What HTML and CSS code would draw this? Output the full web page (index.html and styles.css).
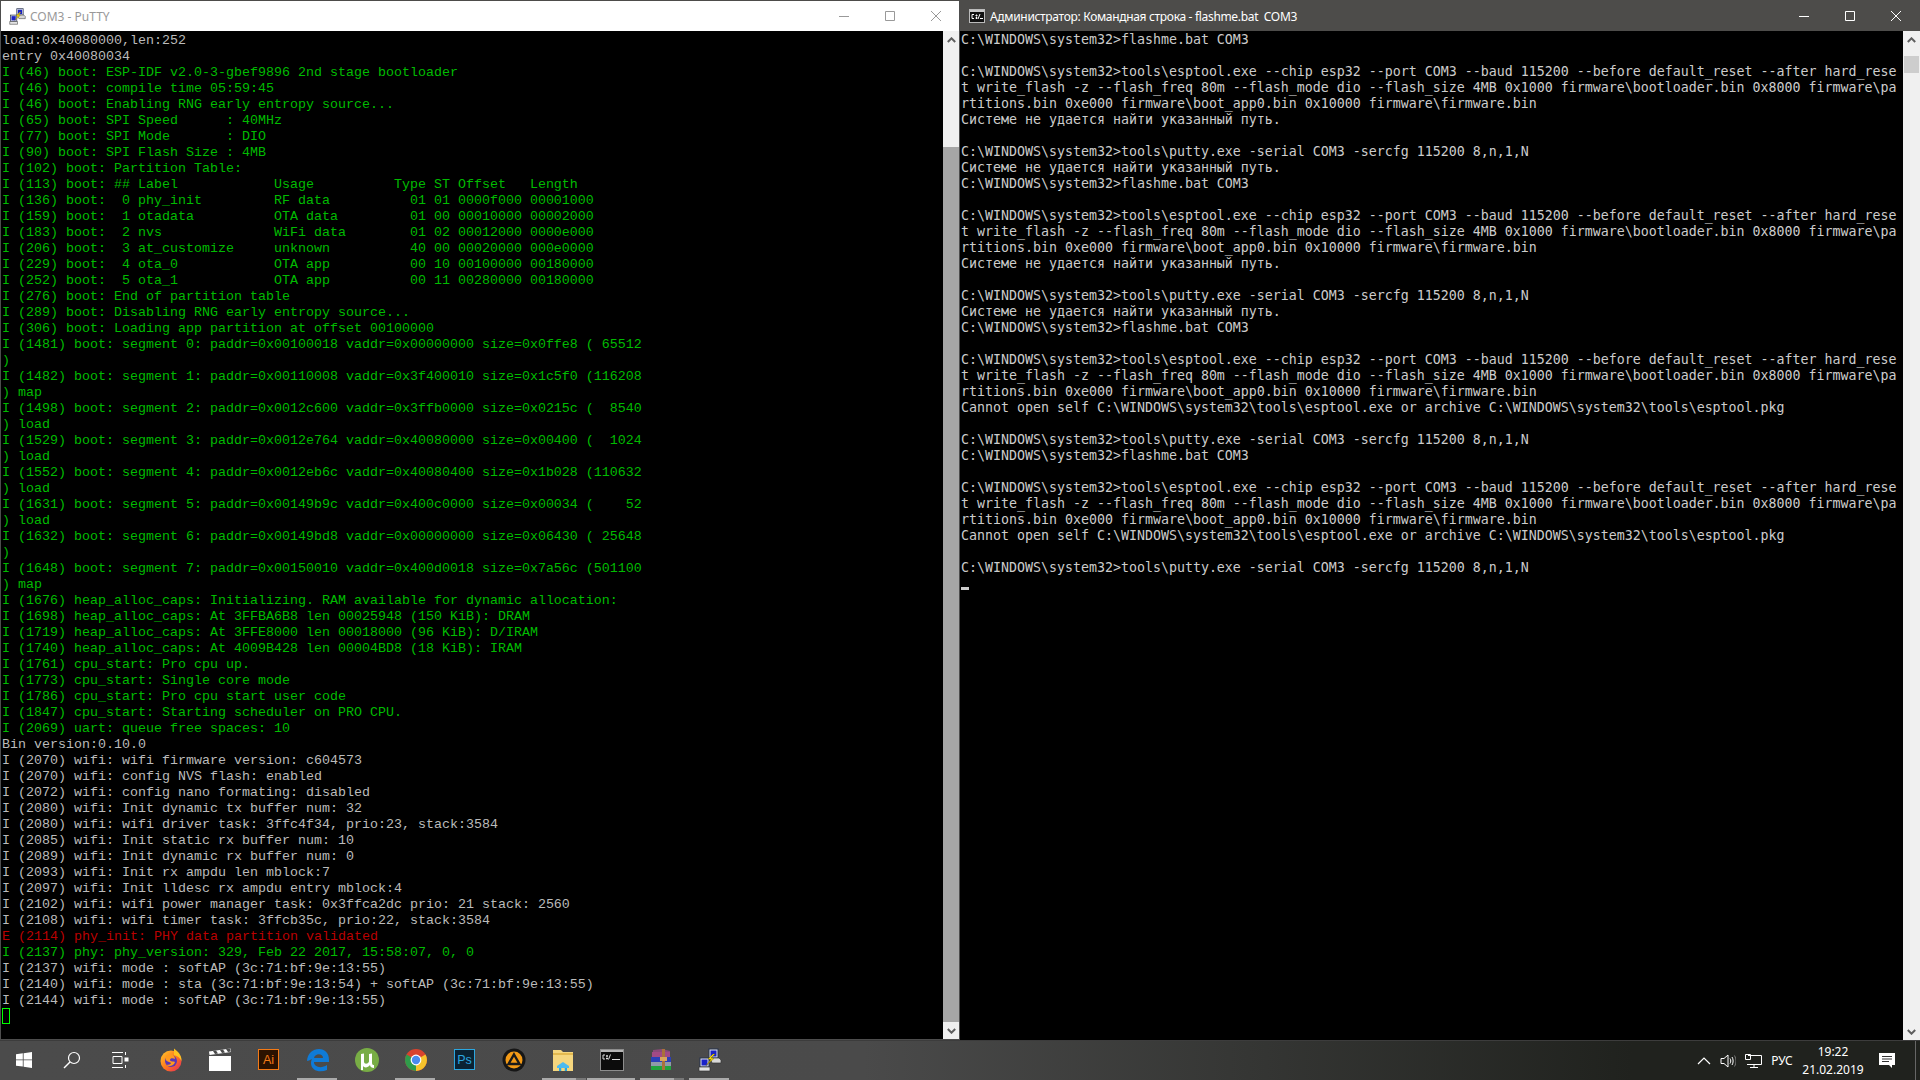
FILE: index.html
```html
<!DOCTYPE html>
<html lang="ru">
<head>
    <meta charset="UTF-8">
    <title>COM3 - PuTTY</title>
    <link rel="stylesheet" href="styles.css">
</head>
<body>
    <svg class="defs" width="0" height="0">
        <symbol id="putty-icon" viewBox="0 0 24 24">
            <rect x="11" y="1" width="9" height="9" fill="#dfe3ea" stroke="#26324f"/>
            <rect x="12.5" y="2.5" width="6" height="6" fill="#1a22c8"/>
            <path d="M12 10h9l2 2v3H14z" fill="#d8d8d8" stroke="#333" stroke-width=".7"/>
            <rect x="2" y="10" width="9" height="9" fill="#dfe3ea" stroke="#26324f"/>
            <rect x="3.500" y="11.500" width="6" height="6" fill="#1a22c8"/>
            <path d="M1 19h11v4H1z" fill="#e4e4e4" stroke="#333" stroke-width=".7"/>
            <path d="M15 6l-5 5 3 .5-5 6 8-7-3-.5 4-4z" fill="#ffe100" stroke="#6b5a00" stroke-width=".4"/>
        </symbol>
    </svg>

    <div class="desktop">
        <section class="window window-putty">
            <header class="titlebar">
                <svg class="title-icon"><use href="#putty-icon"/></svg>
                <span class="title-text">COM3 - PuTTY</span>
                <div class="win-controls">
                    <span class="win-btn"><svg width="10" height="10" viewBox="0 0 10 10"><path d="M0 5.500h10" stroke="currentColor"/></svg></span>
                    <span class="win-btn"><svg width="10" height="10" viewBox="0 0 10 10"><path d="M.5.500h9v9h-9z" fill="none" stroke="currentColor"/></svg></span>
                    <span class="win-btn"><svg width="10" height="10" viewBox="0 0 10 10"><path d="M0 0l10 10M10 0L0 10" stroke="currentColor"/></svg></span>
                </div>
            </header>
            <div class="window-body">
<pre class="putty-term"><span class="t-gray">load:0x40080000,len:252
entry 0x40080034
</span><span class="t-green">I (46) boot: ESP-IDF v2.0-3-gbef9896 2nd stage bootloader
I (46) boot: compile time 05:59:45
I (46) boot: Enabling RNG early entropy source...
I (65) boot: SPI Speed      : 40MHz
I (77) boot: SPI Mode       : DIO
I (90) boot: SPI Flash Size : 4MB
I (102) boot: Partition Table:
I (113) boot: ## Label            Usage          Type ST Offset   Length
I (136) boot:  0 phy_init         RF data          01 01 0000f000 00001000
I (159) boot:  1 otadata          OTA data         01 00 00010000 00002000
I (183) boot:  2 nvs              WiFi data        01 02 00012000 0000e000
I (206) boot:  3 at_customize     unknown          40 00 00020000 000e0000
I (229) boot:  4 ota_0            OTA app          00 10 00100000 00180000
I (252) boot:  5 ota_1            OTA app          00 11 00280000 00180000
I (276) boot: End of partition table
I (289) boot: Disabling RNG early entropy source...
I (306) boot: Loading app partition at offset 00100000
I (1481) boot: segment 0: paddr=0x00100018 vaddr=0x00000000 size=0x0ffe8 ( 65512
)
I (1482) boot: segment 1: paddr=0x00110008 vaddr=0x3f400010 size=0x1c5f0 (116208
) map
I (1498) boot: segment 2: paddr=0x0012c600 vaddr=0x3ffb0000 size=0x0215c (  8540
) load
I (1529) boot: segment 3: paddr=0x0012e764 vaddr=0x40080000 size=0x00400 (  1024
) load
I (1552) boot: segment 4: paddr=0x0012eb6c vaddr=0x40080400 size=0x1b028 (110632
) load
I (1631) boot: segment 5: paddr=0x00149b9c vaddr=0x400c0000 size=0x00034 (    52
) load
I (1632) boot: segment 6: paddr=0x00149bd8 vaddr=0x00000000 size=0x06430 ( 25648
)
I (1648) boot: segment 7: paddr=0x00150010 vaddr=0x400d0018 size=0x7a56c (501100
) map
I (1676) heap_alloc_caps: Initializing. RAM available for dynamic allocation:
I (1698) heap_alloc_caps: At 3FFBA6B8 len 00025948 (150 KiB): DRAM
I (1719) heap_alloc_caps: At 3FFE8000 len 00018000 (96 KiB): D/IRAM
I (1740) heap_alloc_caps: At 4009B428 len 00004BD8 (18 KiB): IRAM
I (1761) cpu_start: Pro cpu up.
I (1773) cpu_start: Single core mode
I (1786) cpu_start: Pro cpu start user code
I (1847) cpu_start: Starting scheduler on PRO CPU.
I (2069) uart: queue free spaces: 10
</span><span class="t-gray">Bin version:0.10.0
I (2070) wifi: wifi firmware version: c604573
I (2070) wifi: config NVS flash: enabled
I (2072) wifi: config nano formating: disabled
I (2080) wifi: Init dynamic tx buffer num: 32
I (2080) wifi: wifi driver task: 3ffc4f34, prio:23, stack:3584
I (2085) wifi: Init static rx buffer num: 10
I (2089) wifi: Init dynamic rx buffer num: 0
I (2093) wifi: Init rx ampdu len mblock:7
I (2097) wifi: Init lldesc rx ampdu entry mblock:4
I (2102) wifi: wifi power manager task: 0x3ffca2dc prio: 21 stack: 2560
I (2108) wifi: wifi timer task: 3ffcb35c, prio:22, stack:3584
</span><span class="t-red">E (2114) phy_init: PHY data partition validated
</span><span class="t-green">I (2137) phy: phy_version: 329, Feb 22 2017, 15:58:07, 0, 0
</span><span class="t-gray">I (2137) wifi: mode : softAP (3c:71:bf:9e:13:55)
I (2140) wifi: mode : sta (3c:71:bf:9e:13:54) + softAP (3c:71:bf:9e:13:55)
I (2144) wifi: mode : softAP (3c:71:bf:9e:13:55)
</span><span class="putty-cursor"></span></pre>
                <div class="scrollbar">
                    <span class="sb-arrow"><svg width="9" height="6" viewBox="0 0 9 6"><path d="M.8 5L4.500 1.300 8.200 5" fill="none" stroke="#5f5f5f" stroke-width="2"/></svg></span>
                    <div class="sb-gap sb-gap-putty"></div>
                    <div class="sb-thumb sb-thumb-putty"></div>
                    <span class="sb-arrow"><svg width="9" height="6" viewBox="0 0 9 6"><path d="M.8 1L4.500 4.700 8.200 1" fill="none" stroke="#5f5f5f" stroke-width="2"/></svg></span>
                </div>
            </div>
        </section>

        <section class="window window-cmd">
            <header class="titlebar">
                <svg class="title-icon title-icon-cmd" viewBox="0 0 16 16">
                    <rect x=".5" y="1.500" width="15" height="13" fill="#111" stroke="#bbb"/>
                    <rect x="1" y="2" width="14" height="2" fill="#c8c8c8"/>
                    <path d="M5 6.500H3v4h2M7 7h1v1H7zm0 2.500h1v1H7zM9 11l2-5M11 10.500h3" fill="none" stroke="#fff"/>
                </svg>
                <span class="title-text">Администратор: Командная строка - flashme.bat  COM3</span>
                <div class="win-controls">
                    <span class="win-btn"><svg width="10" height="10" viewBox="0 0 10 10"><path d="M0 5.500h10" stroke="currentColor"/></svg></span>
                    <span class="win-btn"><svg width="10" height="10" viewBox="0 0 10 10"><path d="M.5.500h9v9h-9z" fill="none" stroke="currentColor"/></svg></span>
                    <span class="win-btn"><svg width="10" height="10" viewBox="0 0 10 10"><path d="M0 0l10 10M10 0L0 10" stroke="currentColor"/></svg></span>
                </div>
            </header>
            <div class="window-body">
<pre class="cmd-term">C:\WINDOWS\system32>flashme.bat COM3

C:\WINDOWS\system32>tools\esptool.exe --chip esp32 --port COM3 --baud 115200 --before default_reset --after hard_rese
t write_flash -z --flash_freq 80m --flash_mode dio --flash_size 4MB 0x1000 firmware\bootloader.bin 0x8000 firmware\pa
rtitions.bin 0xe000 firmware\boot_app0.bin 0x10000 firmware\firmware.bin
Системе не удается найти указанный путь.

C:\WINDOWS\system32>tools\putty.exe -serial COM3 -sercfg 115200 8,n,1,N
Системе не удается найти указанный путь.
C:\WINDOWS\system32>flashme.bat COM3

C:\WINDOWS\system32>tools\esptool.exe --chip esp32 --port COM3 --baud 115200 --before default_reset --after hard_rese
t write_flash -z --flash_freq 80m --flash_mode dio --flash_size 4MB 0x1000 firmware\bootloader.bin 0x8000 firmware\pa
rtitions.bin 0xe000 firmware\boot_app0.bin 0x10000 firmware\firmware.bin
Системе не удается найти указанный путь.

C:\WINDOWS\system32>tools\putty.exe -serial COM3 -sercfg 115200 8,n,1,N
Системе не удается найти указанный путь.
C:\WINDOWS\system32>flashme.bat COM3

C:\WINDOWS\system32>tools\esptool.exe --chip esp32 --port COM3 --baud 115200 --before default_reset --after hard_rese
t write_flash -z --flash_freq 80m --flash_mode dio --flash_size 4MB 0x1000 firmware\bootloader.bin 0x8000 firmware\pa
rtitions.bin 0xe000 firmware\boot_app0.bin 0x10000 firmware\firmware.bin
Cannot open self C:\WINDOWS\system32\tools\esptool.exe or archive C:\WINDOWS\system32\tools\esptool.pkg

C:\WINDOWS\system32>tools\putty.exe -serial COM3 -sercfg 115200 8,n,1,N
C:\WINDOWS\system32>flashme.bat COM3

C:\WINDOWS\system32>tools\esptool.exe --chip esp32 --port COM3 --baud 115200 --before default_reset --after hard_rese
t write_flash -z --flash_freq 80m --flash_mode dio --flash_size 4MB 0x1000 firmware\bootloader.bin 0x8000 firmware\pa
rtitions.bin 0xe000 firmware\boot_app0.bin 0x10000 firmware\firmware.bin
Cannot open self C:\WINDOWS\system32\tools\esptool.exe or archive C:\WINDOWS\system32\tools\esptool.pkg

C:\WINDOWS\system32>tools\putty.exe -serial COM3 -sercfg 115200 8,n,1,N
<span class="cmd-cursor"></span></pre>
                <div class="scrollbar">
                    <span class="sb-arrow"><svg width="9" height="6" viewBox="0 0 9 6"><path d="M.8 5L4.500 1.300 8.200 5" fill="none" stroke="#5f5f5f" stroke-width="2"/></svg></span>
                    <div class="sb-thumb sb-thumb-cmd"></div>
                    <div class="sb-gap sb-gap-cmd"></div>
                    <span class="sb-arrow"><svg width="9" height="6" viewBox="0 0 9 6"><path d="M.8 1L4.500 4.700 8.200 1" fill="none" stroke="#5f5f5f" stroke-width="2"/></svg></span>
                </div>
            </div>
        </section>
    </div>

    <footer class="taskbar">
        <div class="task-sys">
            <span class="task-btn">
                <svg width="16" height="16" viewBox="0 0 16 16"><path d="M0 2.300l6.800-1v6.200H0zM7.600 1.200L16 0v7.500H7.600zM0 8.300h6.800v6.300L0 13.700zM7.600 8.300H16V16l-8.400-1.200z" fill="#fff"/></svg>
            </span>
            <span class="task-btn">
                <svg width="18" height="18" viewBox="0 0 18 18"><circle cx="11" cy="7" r="5.500" fill="none" stroke="#fff" stroke-width="1.200"/><path d="M7 11l-6 6" stroke="#fff" stroke-width="1.400"/></svg>
            </span>
            <span class="task-btn">
                <svg width="18" height="18" viewBox="0 0 18 18" fill="none" stroke="#fff"><path d="M1 1.500h11M1 16.500h11M2 5.500h9v7H2zM14.500 1v3M14.500 14v3"/><rect x="14" y="7" width="3" height="3" fill="#fff"/></svg>
            </span>
        </div>
        <div class="task-apps">
            <span class="task-btn app">
                <svg width="24" height="24" viewBox="0 0 24 24">
                    <defs><linearGradient id="ff" x1="0" y1="0" x2="1" y2="1"><stop offset="0" stop-color="#ffcb2d"/><stop offset=".5" stop-color="#ff7a1c"/><stop offset="1" stop-color="#e3245f"/></linearGradient></defs>
                    <circle cx="12" cy="13" r="10.500" fill="url(#ff)"/>
                    <path d="M15 .5c4 3 8 7 7.500 12.500C21 10 19 8 15 7z" fill="#ffc21f"/>
                    <circle cx="12" cy="13" r="6" fill="#5a37b5"/>
                    <path d="M8 7c4-2 8 0 8 4-2-1-5-1-5 1s4 1 5 2c-1 4-6 5-9 3 3 0 5-1 5-2s-4-1-5-3 0-4 1-5z" fill="#ff9a1e"/>
                </svg>
            </span>
            <span class="task-btn app">
                <svg width="24" height="24" viewBox="0 0 24 24">
                    <rect x="1" y="8" width="22" height="15" fill="#fff"/>
                    <path d="M1 3.500L22.500 .5l.5 3.500L1.500 7z" fill="#fff"/>
                    <path d="M5 3l2 3 3-.4-2-3zM12 2l2 3 3-.4-2-3zM18 1l2 3 2.800-.4-.8-3z" fill="#4a4a4a"/>
                </svg>
            </span>
            <span class="task-btn app">
                <span class="badge badge-ai">Ai</span>
            </span>
            <span class="task-btn app on">
                <svg width="24" height="24" viewBox="0 0 24 24">
                    <path d="M1 13C1.500 5 7 1 13 1c6 0 10 4 10 11v2H8c0 5 7 7 13 3v5c-7 3-16 1-16-7 0-2 .5-3 1-4-2 1-4 2-5 2zM8 10h9c0-5-8-5-9 0z" fill="#0f7bd8"/>
                </svg>
            </span>
            <span class="task-btn app">
                <svg width="24" height="24" viewBox="0 0 24 24">
                    <circle cx="12" cy="12" r="12" fill="#78ad45"/>
                    <path d="M6 6l3-.5v8c0 3 4 3 5 0V6l3-.5V14c0 3 1 3 2 3v3c-2 0-4-1-4-3-2 3-6 3-7 1v4H6z" fill="#fff"/>
                </svg>
            </span>
            <span class="task-btn app on">
                <svg width="24" height="24" viewBox="0 0 24 24">
                    <circle cx="12" cy="12" r="11" fill="#d8432f"/>
                    <path d="M12 12L2.500 6.500A11 11 0 0 0 12 23z" fill="#2f9c4b"/>
                    <path d="M12 12l9.500-5.500A11 11 0 0 1 12 23z" fill="#f6c32c"/>
                    <circle cx="12" cy="12" r="5.400" fill="#fff"/>
                    <circle cx="12" cy="12" r="4.200" fill="#4a8bef"/>
                </svg>
            </span>
            <span class="task-btn app">
                <span class="badge badge-ps">Ps</span>
            </span>
            <span class="task-btn app">
                <svg width="24" height="24" viewBox="0 0 24 24">
                    <circle cx="12" cy="12" r="11.500" fill="#161616"/>
                    <circle cx="12" cy="12" r="8.500" fill="#f39a16"/>
                    <path d="M12 6.500l5.500 9.500h-11z" fill="none" stroke="#1a1a1a" stroke-width="2.400"/>
                </svg>
            </span>
            <span class="task-btn app on stacked">
                <svg width="24" height="24" viewBox="0 0 24 24">
                    <path d="M2 2h8l2 2h10v19H2z" fill="#f5d67e"/>
                    <path d="M2 5h20v2H2z" fill="#e3b94f"/>
                    <path d="M8 23v-5l4-3 4 3v5h-2.500v-3h-3v3z" fill="#2aa6e0"/>
                    <path d="M6 18l6-4 6 4v2H6z" fill="#4cbaf0"/>
                    <path d="M10.500 20h3v3h-3z" fill="#f5d67e"/>
                </svg>
            </span>
            <span class="task-btn app on wide">
                <svg width="24" height="22" viewBox="0 0 24 22">
                    <rect x=".5" y=".5" width="23" height="21" fill="#0c0c0c" stroke="#8d8d8d"/>
                    <rect x="1" y="1" width="22" height="2" fill="#b5b5b5"/>
                    <path d="M5 6H3v4h2M6.500 6.500h1v1h-1zm0 2.500h1v1h-1zM8.500 10.500l2-5M12 10.500h8" fill="none" stroke="#ddd"/>
                </svg>
            </span>
            <span class="task-btn app on stacked">
                <svg width="24" height="24" viewBox="0 0 24 24">
                    <path d="M4 2l9-1 8 2v6H4z" fill="#8a4a7a"/>
                    <path d="M2 9h20v5H2z" fill="#2b3fb8"/>
                    <path d="M2 14h20v4H2z" fill="#8f9aa8"/>
                    <path d="M2 18h20v4H2z" fill="#21a33d"/>
                    <path d="M3 4h18v5H3z" fill="#a14a86"/>
                    <path d="M13 1h3v21h-3z" fill="#a9713a"/>
                    <path d="M11 9h7v4h-7z" fill="#d9a45e"/>
                </svg>
            </span>
            <span class="task-btn app on">
                <svg width="24" height="24"><use href="#putty-icon"/></svg>
            </span>
        </div>
        <div class="tray">
            <svg class="tray-icon" width="14" height="8" viewBox="0 0 14 8"><path d="M1 7l6-6 6 6" fill="none" stroke="#fff" stroke-width="1.200"/></svg>
            <svg class="tray-icon" width="16" height="16" viewBox="0 0 16 16" fill="none" stroke="#fff"><path d="M1 5.500h3L8 2v12l-4-3.500H1z"/><path d="M10 5.500c1 1.500 1 3.500 0 5M12 4c1.500 2 1.500 6 0 8"/><path d="M14.500 2.500c2 3 2 8 0 11" stroke="#777"/></svg>
            <svg class="tray-icon" width="17" height="14" viewBox="0 0 17 14" fill="none" stroke="#fff"><path d="M3 1.500h13.500v9H2M9 10.500v2.500M5 13.500h8M.5.500h5v5h-5z"/></svg>
            <span class="tray-lang">РУС</span>
            <div class="tray-clock">
                <span>19:22</span>
                <span>21.02.2019</span>
            </div>
            <svg class="tray-notify" width="16" height="16" viewBox="0 0 16 16"><path d="M0 0h16v12h-3v3l-3-3H0z" fill="#fff"/><path d="M3 3.500h10M3 6h10M3 8.500h7" stroke="#333"/></svg>
            <span class="tray-peek"></span>
        </div>
    </footer>
</body>
</html>
```

FILE: styles.css
```css
* {
    margin: 0;
    padding: 0;
    box-sizing: border-box;
}

body {
    width: 1920px;
    height: 1080px;
    overflow: hidden;
    background: #000;
    font-family: "Noto Sans", sans-serif;
    display: flex;
    flex-direction: column;
}

.defs {
    position: absolute;
}

.desktop {
    height: 1040px;
    display: flex;
}

.window {
    width: 960px;
    display: flex;
    flex-direction: column;
}

.window-putty {
    border-left: 1px solid #4d4d4d;
    border-right: 1px solid #4d4d4d;
    border-top: 1px solid #4d4c4a;
    border-bottom: 1px solid #4d4d4d;
}

.window-cmd {
    border-top: 1px solid #4d4c4a;
}

.titlebar {
    height: 30px;
    display: flex;
    align-items: center;
    font-size: 12px;
}

.window-putty .titlebar {
    background: #fff;
    color: #999;
    padding-left: 8px;
}

.window-cmd .titlebar {
    background: #4d4c4a;
    color: #fff;
    padding-left: 9px;
}

.window-cmd .title-text {
    letter-spacing: -0.32px;
}

.window-cmd .win-controls {
    margin-right: 1px;
}

.title-icon {
    width: 17px;
    height: 17px;
    margin-right: 4px;
    flex-shrink: 0;
}

.title-icon-cmd {
    width: 16px;
    height: 16px;
    margin-right: 5px;
}

.title-text {
    white-space: pre;
}

.win-controls {
    margin-left: auto;
    display: flex;
}

.win-btn {
    width: 46px;
    height: 30px;
    display: flex;
    align-items: center;
    justify-content: center;
}

.window-body {
    flex-grow: 1;
    min-height: 0;
    display: flex;
    background: #000;
}

.putty-term,
.cmd-term {
    flex-grow: 1;
    line-height: 16px;
    white-space: pre;
    overflow: hidden;
}

.putty-term {
    font-family: "Liberation Mono", monospace;
    font-size: 13.33px;
    padding: 2px 0 0 1px;
}

.cmd-term {
    font-family: "DejaVu Sans Mono", monospace;
    font-size: 13.29px;
    color: #ccc;
    padding: 1px 0 0 1px;
}

.t-gray {
    color: #bbb;
}

.t-green {
    color: #00bb00;
}

.t-red {
    color: #bb0000;
}

.putty-cursor {
    display: inline-block;
    width: 8px;
    height: 16px;
    margin-top: -1px;
    border: 1px solid #00ff00;
    vertical-align: top;
}

.cmd-cursor {
    display: inline-block;
    width: 8px;
    height: 3px;
    margin-top: 11px;
    background: #ccc;
    vertical-align: top;
}

.scrollbar {
    width: 17px;
    flex-shrink: 0;
    display: flex;
    flex-direction: column;
    background: #f0f0f0;
}

.window-putty .scrollbar {
    width: 16px;
}

.sb-arrow {
    height: 17px;
    display: flex;
    align-items: center;
    justify-content: center;
    flex-shrink: 0;
}

.sb-gap-putty {
    height: 99px;
}

.sb-gap-cmd {
    flex-grow: 1;
}

.sb-thumb {
    background: #cdcdcd;
}

.sb-thumb-putty {
    flex-grow: 1;
    background: #a6a6a6;
}

.sb-thumb-cmd {
    height: 17px;
    margin: 8px 1px 0;
}

.taskbar {
    height: 40px;
    display: flex;
    align-items: center;
    background: linear-gradient(90deg, #4b4b4b 0, #4a4a4a 45%, #20221e 85%);
    border-top: 1px solid #3c3c3c;
}

.task-sys {
    display: flex;
    margin-right: 2px;
}

.task-btn {
    position: relative;
    width: 48px;
    height: 39px;
    padding-bottom: 2px;
    display: flex;
    align-items: center;
    justify-content: center;
}

.task-apps {
    display: flex;
}

.task-btn.app {
    width: 49px;
}

/* running app marker along the bottom edge */
.task-btn.on::after {
    content: "";
    position: absolute;
    left: 4px;
    right: 5px;
    bottom: 0;
    height: 2px;
    background: #aaa;
}

.task-btn.wide::after {
    left: 0;
    right: 1px;
}

.task-btn.stacked::after {
    right: 1px;
    background: linear-gradient(90deg, #aaa 0, #aaa 77%, #777 77%);
}

.badge {
    width: 21px;
    height: 21px;
    display: flex;
    align-items: center;
    justify-content: center;
    font-family: "Liberation Sans", sans-serif;
    font-size: 12.5px;
    border: 1.5px solid;
}

.badge-ai {
    background: #2b1200;
    border-color: #f47a16;
    color: #f47a16;
}

.badge-ps {
    background: #0b2233;
    border-color: #2ca7e0;
    color: #2ca7e0;
}

.tray {
    margin-left: auto;
    height: 100%;
    display: flex;
    align-items: center;
    color: #fff;
    font-size: 12px;
}

.tray-icon {
    margin-right: 9px;
}

.tray-lang {
    margin-left: -2px;
    width: 26px;
    text-align: center;
}

.tray-clock {
    width: 68px;
    margin-left: 4px;
    display: flex;
    flex-direction: column;
    align-items: center;
    line-height: 18px;
}

.tray-notify {
    margin-left: 12px;
}

.tray-peek {
    width: 1px;
    height: 100%;
    margin-left: 20px;
    margin-right: 4px;
    background: #666;
}
```
